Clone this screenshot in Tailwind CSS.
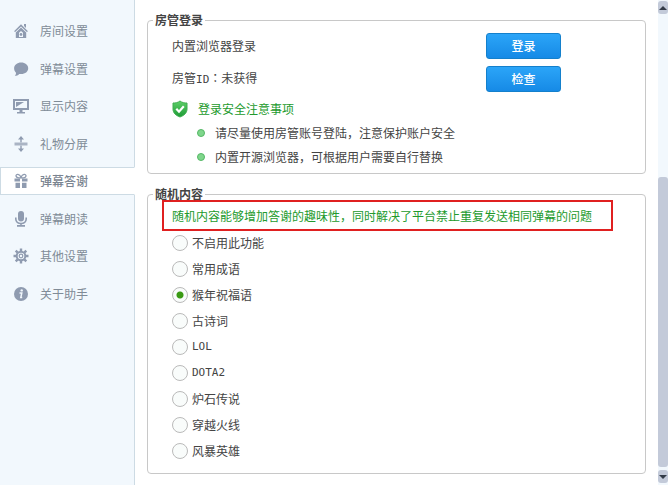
<!DOCTYPE html>
<html lang="zh-CN">
<head>
<meta charset="utf-8">
<meta name="viewport" content="width=device-width, initial-scale=1">
<title>弹幕答谢</title>
<script src="https://cdn.jsdelivr.net/npm/@tailwindcss/browser@4"></script>
</head>
<body class="flex min-h-screen bg-white text-[12px] leading-4 text-[#444] font-['Noto_Sans_CJK_SC',sans-serif]">

<nav class="w-[135px] shrink-0 border-r border-[#cddbe4] bg-[#f2f8fd] pt-[17px] text-[#808b97]">
  <ul class="flex h-[291px] flex-col justify-between">
    <li><a href="#" class="flex h-7 items-center gap-[11px] pl-[13px]">
      <svg class="size-4" viewBox="0 0 16 16" fill="#8f9bb0"><path d="M8 1.200 15 8.200 13.800 9 8 3.400 2.200 9 1 8.200Z"/><path d="M11 1h2v4l-2-2Z"/><path fill-rule="evenodd" d="M8 4.400 13.200 9.400V15H2.800V9.400ZM6 14h4V9.800L8 8 6 9.800Z"/><circle cx="8" cy="11.500" r="1.400"/></svg>
      房间设置</a></li>
    <li><a href="#" class="flex h-7 items-center gap-[11px] pl-[13px]">
      <svg class="size-4" viewBox="0 0 16 16" fill="#8f9bb0"><path d="M8.200 1.500c4 0 7 2.500 7 5.800s-3 5.800-7 5.800c-.7 0-1.400-.1-2-.2-1.200 1.400-2.700 1.900-4.400 1.900 1-.8 1.300-1.900 1.200-3C1.800 10.700 1.100 9.100 1.100 7.300c0-3.300 3.100-5.800 7.100-5.800Z"/></svg>
      弹幕设置</a></li>
    <li><a href="#" class="flex h-7 items-center gap-[11px] pl-[13px]">
      <svg class="size-4" viewBox="0 0 16 16" fill="#8f9bb0"><path fill-rule="evenodd" d="M0 1h16v11H0ZM2 3v7h12V3Z"/><path d="M3 4h8L3 9Z"/><path d="M6.500 12h3v2H12v1.500H4V14h2.500Z"/></svg>
      显示内容</a></li>
    <li><a href="#" class="flex h-7 items-center gap-[11px] pl-[13px]">
      <svg class="size-4" viewBox="0 0 16 16" fill="#8f9bb0"><path d="M8 0l3 3.500H8.700V6.500H7.300V3.500H5ZM8 16l3-3.500H8.700V9.500H7.300v3H5Z"/><path fill="#aab4c4" d="M1.500 6.500h13v3h-13Z"/></svg>
      礼物分屏</a></li>
    <li><a href="#" aria-current="page" class="-mr-px flex h-7 items-center gap-[11px] border border-[#cddbe4] border-r-white bg-white pl-3 font-medium text-[#7b8591]">
      <svg class="size-4" viewBox="0 0 16 16" fill="#8f9bb0"><path d="M1.500 5.500H7v3H1.500ZM9 5.500h5.500v3H9ZM2.500 9.700H7V15H2.500ZM9 9.700h4.500V15H9Z"/><path d="M7.600 5C6 5 3 4.500 3 2.800 3 .8 6.500.8 8 4.200 9.500.8 13 .8 13 2.800 13 4.500 10 5 8.400 5" fill="none" stroke="#8f9bb0" stroke-width="1.300"/></svg>
      弹幕答谢</a></li>
    <li><a href="#" class="flex h-7 items-center gap-[11px] pl-[13px]">
      <svg class="size-4" viewBox="0 0 16 16" fill="#8f9bb0"><rect x="5" y="0" width="6" height="10.500" rx="3"/><path d="M2.800 6.500V8c0 2.800 2.300 4.500 5.200 4.500s5.200-1.700 5.200-4.500V6.500M8 12v3M4 14.900h8" fill="none" stroke="#8f9bb0" stroke-width="1.600"/></svg>
      弹幕朗读</a></li>
    <li><a href="#" class="flex h-7 items-center gap-[11px] pl-[13px]">
      <svg class="size-4" viewBox="0 0 16 16" fill="none" stroke="#8f9bb0"><path stroke-width="2.400" d="M8 .5v3M8 12.500v3M.5 8h3M12.500 8h3M2.700 2.700l2 2M11.300 11.300l2 2M2.700 13.300l2-2M11.300 4.700l2-2"/><circle cx="8" cy="8" r="4.300" stroke-width="2"/><circle cx="8" cy="8" r="1.800" stroke-width="1.200"/></svg>
      其他设置</a></li>
    <li><a href="#" class="flex h-7 items-center gap-[11px] pl-[13px]">
      <svg class="size-4" viewBox="0 0 16 16"><circle cx="8" cy="8" r="7" fill="#8f9bb0"/><circle cx="8.700" cy="4.400" r="1.200" fill="#f2f8fd"/><path d="M6.500 7h2.300l-1 4.500h1.400" fill="none" stroke="#f2f8fd" stroke-width="1.500"/></svg>
      关于助手</a></li>
  </ul>
</nav>

<main class="min-w-0 flex-1 pr-3 pb-[11px] pl-3 pt-[14px]">
  <fieldset class="rounded border border-[#c8c8c8] pb-1">
    <legend class="ml-[5px] h-3 px-[2px] font-bold leading-3">房管登录</legend>
    <div class="flex flex-col gap-[7px] pl-6 pr-[84px] pt-[7px]">
      <div class="flex h-[26px] items-center justify-between">
        <span>内置浏览器登录</span>
        <button type="button" class="h-[26px] w-[75px] rounded-[3px] border border-[#1480cc] bg-linear-to-b from-[#2ba5f8] to-[#168ae6] font-medium text-white">登录</button>
      </div>
      <div class="flex h-[26px] items-center justify-between">
        <span>房管<span class="font-['DejaVu_Sans_Mono',monospace] text-[11px]">ID</span><span class="font-['Noto_Sans_CJK_TC',sans-serif]" lang="zh-TW">：</span>未获得</span>
        <button type="button" class="h-[26px] w-[75px] rounded-[3px] border border-[#1480cc] bg-linear-to-b from-[#2ba5f8] to-[#168ae6] font-medium text-white">检查</button>
      </div>
    </div>
    <h2 class="mt-[5px] flex h-6 items-center gap-[10px] pl-6 text-[#229a2c]">
      <svg class="h-[18px] w-4" viewBox="0 0 16 18"><defs><linearGradient id="shield" x1="0" y1="0" x2="0" y2="1"><stop offset="0" stop-color="#5fd069"/><stop offset="1" stop-color="#1c9a35"/></linearGradient></defs><path d="M8 1C6 2.500 3.500 3.200 1 3v6c0 4 3 6.500 7 8 4-1.500 7-4 7-8V3C12.500 3.200 10 2.500 8 1Z" fill="url(#shield)" stroke="#3fae50"/><path d="M4.300 8.800 7 11.700l4.800-5.400" fill="none" stroke="#fff" stroke-width="2.200"/></svg>
      登录安全注意事项
    </h2>
    <ul class="pl-[49px]">
      <li class="flex h-6 items-center gap-[10px]"><span class="size-2 shrink-0 rounded-full border border-[#55b866] bg-[#7fd68c]"></span>请尽量使用房管账号登陆，注意保护账户安全</li>
      <li class="flex h-6 items-center gap-[10px]"><span class="size-2 shrink-0 rounded-full border border-[#55b866] bg-[#7fd68c]"></span>内置开源浏览器，可根据用户需要自行替换</li>
    </ul>
  </fieldset>

  <fieldset class="mt-[14px] rounded border border-[#c8c8c8] pb-[9px]">
    <legend class="ml-[5px] h-3 px-[2px] font-bold leading-3">随机内容</legend>
    <p class="ml-[14px] mr-8 flex h-[31px] items-center border-2 border-[#e02020] pl-2 text-[#229a2c]">随机内容能够增加答谢的趣味性，同时解决了平台禁止重复发送相同弹幕的问题</p>
    <div class="-mt-px pl-6">
      <label class="flex h-[26px] items-center gap-1"><input type="radio" name="topic" class="size-4 appearance-none rounded-full border border-[#bababa] bg-[#f9fcfb] checked:bg-[radial-gradient(circle,#3a9a14_3px,#f9fcfb_4px)]">不启用此功能</label>
      <label class="flex h-[26px] items-center gap-1"><input type="radio" name="topic" class="size-4 appearance-none rounded-full border border-[#bababa] bg-[#f9fcfb] checked:bg-[radial-gradient(circle,#3a9a14_3px,#f9fcfb_4px)]">常用成语</label>
      <label class="flex h-[26px] items-center gap-1"><input type="radio" name="topic" checked class="size-4 appearance-none rounded-full border border-[#bababa] bg-[#f9fcfb] checked:bg-[radial-gradient(circle,#3a9a14_3px,#f9fcfb_4px)]">猴年祝福语</label>
      <label class="flex h-[26px] items-center gap-1"><input type="radio" name="topic" class="size-4 appearance-none rounded-full border border-[#bababa] bg-[#f9fcfb] checked:bg-[radial-gradient(circle,#3a9a14_3px,#f9fcfb_4px)]">古诗词</label>
      <label class="flex h-[26px] items-center gap-1"><input type="radio" name="topic" class="size-4 appearance-none rounded-full border border-[#bababa] bg-[#f9fcfb] checked:bg-[radial-gradient(circle,#3a9a14_3px,#f9fcfb_4px)]"><span class="font-['DejaVu_Sans_Mono',monospace] text-[11px]">LOL</span></label>
      <label class="flex h-[26px] items-center gap-1"><input type="radio" name="topic" class="size-4 appearance-none rounded-full border border-[#bababa] bg-[#f9fcfb] checked:bg-[radial-gradient(circle,#3a9a14_3px,#f9fcfb_4px)]"><span class="font-['DejaVu_Sans_Mono',monospace] text-[11px]">DOTA2</span></label>
      <label class="flex h-[26px] items-center gap-1"><input type="radio" name="topic" class="size-4 appearance-none rounded-full border border-[#bababa] bg-[#f9fcfb] checked:bg-[radial-gradient(circle,#3a9a14_3px,#f9fcfb_4px)]">炉石传说</label>
      <label class="flex h-[26px] items-center gap-1"><input type="radio" name="topic" class="size-4 appearance-none rounded-full border border-[#bababa] bg-[#f9fcfb] checked:bg-[radial-gradient(circle,#3a9a14_3px,#f9fcfb_4px)]">穿越火线</label>
      <label class="flex h-[26px] items-center gap-1"><input type="radio" name="topic" class="size-4 appearance-none rounded-full border border-[#bababa] bg-[#f9fcfb] checked:bg-[radial-gradient(circle,#3a9a14_3px,#f9fcfb_4px)]">风暴英雄</label>
    </div>
  </fieldset>
</main>

<div class="flex w-[10px] shrink-0 flex-col bg-[#f2f8fd] pt-px pb-[2px]">
  <button type="button" aria-label="向上滚动" class="flex h-[13px] items-center justify-center rounded-[3px] bg-[#c3cad9]"><svg class="h-1 w-2" viewBox="0 0 8 4"><path d="M4 0 8 4H0Z" fill="#333b48"/></svg></button>
  <div class="grow-[163]"></div>
  <div class="grow-[290] rounded-[3px] bg-[#c3cad9]"></div>
  <button type="button" aria-label="向下滚动" class="mt-[3px] flex h-[13px] items-center justify-center rounded-[3px] bg-[#c3cad9]"><svg class="h-1 w-2" viewBox="0 0 8 4"><path d="M0 0H8L4 4Z" fill="#333b48"/></svg></button>
</div>

</body>
</html>
